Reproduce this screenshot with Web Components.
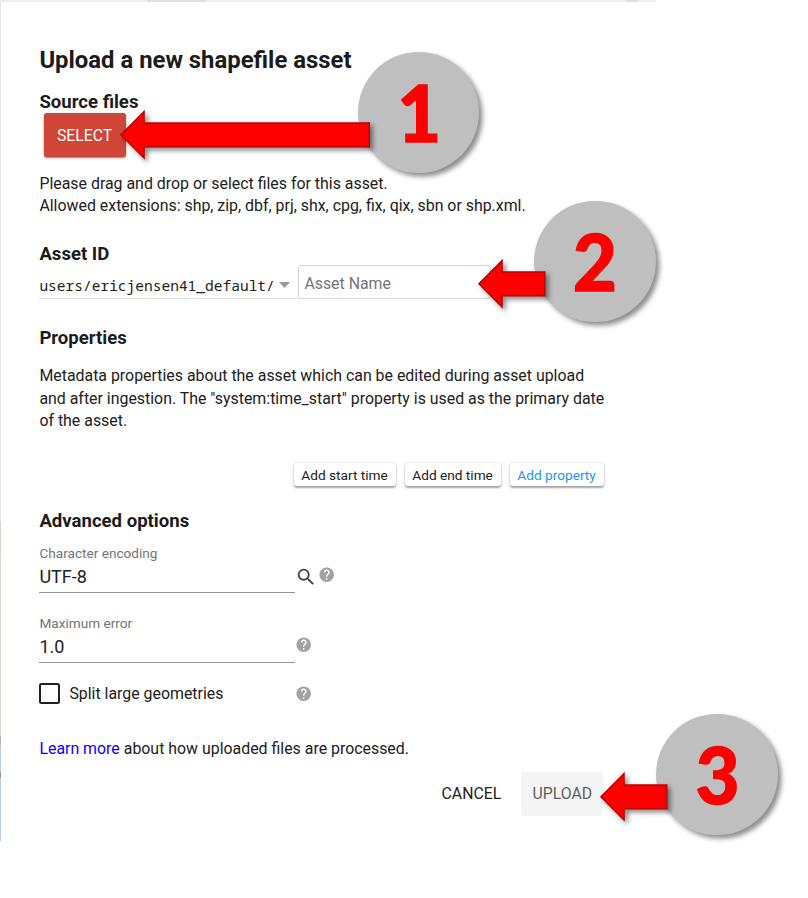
<!DOCTYPE html>
<html lang="en">
<head>
<meta charset="utf-8">
<title>Upload a new shapefile asset</title>
<style>
body{margin:0;background:#fff;font-family:Roboto,"Liberation Sans",sans-serif;color:#212121}
</style>
</head>
<body>
<tutorial-page></tutorial-page>
<script>
function define(name, html){
  const t=document.createElement('template');t.innerHTML=html;
  customElements.define(name,class extends HTMLElement{
    constructor(){super();this.attachShadow({mode:'open'}).append(t.content.cloneNode(true));}
  });
}

define('section-title',`<style>:host{display:block;font-size:18.57px;font-weight:700;line-height:22px;color:#1b1b1b;white-space:nowrap}</style><slot></slot>`);

define('body-text',`<style>:host{display:block;font-size:15.9px;line-height:22.4px;white-space:nowrap}</style><slot></slot>`);

define('action-button',`<style>
:host{display:flex;align-items:center;justify-content:center;box-sizing:border-box;height:44px;border-radius:3px;font-size:15.8px;white-space:nowrap}
:host([kind=primary]){background:#d04536;color:#fff;box-shadow:0 1px 2px rgba(0,0,0,.5)}
:host([kind=disabled]){background:#f5f5f5;color:#616161}
</style><slot></slot>`);

define('chip-button',`<style>
:host{display:flex;align-items:center;justify-content:center;height:23.5px;border-radius:3px;background:#fff;font-size:13.66px;white-space:nowrap;box-shadow:0 1.5px 2px rgba(0,0,0,.34),0 0 3px rgba(0,0,0,.1)}
:host([kind=link]){color:#2492f8}
</style><slot></slot>`);

define('help-icon',`<style>:host{display:block;width:17.4px;height:17.4px}svg{display:block;width:100%;height:100%}</style>
<svg viewBox="0 0 24 24"><path fill="#a2a2a2" d="M12 2C6.48 2 2 6.48 2 12s4.48 10 10 10 10-4.48 10-10S17.52 2 12 2zm1 17h-2v-2h2v2zm2.07-7.75l-.9.92C13.45 12.9 13 13.5 13 15h-2v-.5c0-1.1.45-2.1 1.17-2.83l1.24-1.26c.37-.36.59-.86.59-1.41 0-1.1-.9-2-2-2s-2 .9-2 2H8c0-2.21 1.79-4 4-4s4 1.79 4 4c0 .88-.36 1.68-.93 2.25z"/></svg>`);

define('search-icon',`<style>:host{display:block;width:22px;height:22px}svg{display:block;width:100%;height:100%}</style>
<svg viewBox="0 0 24 24"><path fill="#444" d="M15.5 14h-.79l-.28-.27A6.471 6.471 0 0 0 16 9.5 6.5 6.5 0 1 0 9.5 16c1.61 0 3.09-.59 4.23-1.57l.27.28v.79l5 4.99L20.49 19l-4.99-5zm-6 0C7.01 14 5 11.99 5 9.5S7.01 5 9.5 5 14 7.01 14 9.5 11.99 14 9.5 14z"/></svg>`);

define('text-field',`<style>
:host{display:block;box-sizing:border-box;width:256px;height:47.5px;border-bottom:1px solid #949494}
.l{font-size:13.62px;line-height:16px;color:#757575}
.v{font-size:18px;line-height:22px;margin-top:5px}
</style><div class="l"><slot name="label"></slot></div><div class="v"><slot></slot></div>`);

define('asset-id-row',`<style>
:host{display:flex;height:34px}
.path{box-sizing:border-box;width:259px;height:34px;border-bottom:1px solid #e0e0e0;display:flex;align-items:center;font:14.54px/22px "Noto Sans Mono","DejaVu Sans Mono",monospace;padding-top:6.6px;white-space:nowrap}
svg{display:block;margin-left:4.5px;width:11px;height:6px}
.name{box-sizing:border-box;width:192.5px;height:34px;border:1px solid #d4d4d4;border-radius:3px;padding:2.8px 0 0 5px;display:flex;align-items:center;font-size:15.86px;color:#757575}
</style><div class="path"><slot name="path"></slot><svg viewBox="0 0 11 6"><path fill="#999" d="M0 0h11L5.5 6z"/></svg></div><div class="name"><slot name="name"></slot></div>`);

define('check-box',`<style>
:host{display:flex;align-items:center;height:21px;width:256.5px;font-size:15.88px;white-space:nowrap}
i{box-sizing:border-box;width:21px;height:21px;border:2px solid #212121;border-radius:2.5px;margin-right:9px}
</style><i></i><slot></slot>`);

/* Numbered disc of the walkthrough */
define('step-badge',`<style>
:host{position:absolute;box-sizing:border-box;width:121.5px;height:121.5px;padding:1px 1px 0 0;border-radius:50%;background:#bfbfbf;box-shadow:3.5px 3.5px 5px rgba(0,0,0,.45);display:flex;align-items:center;justify-content:center;color:#f00;font:700 86.5px/1 Carlito,Lato,sans-serif;-webkit-text-stroke:1.6px #f00;paint-order:stroke;stroke-linejoin:round}
</style><slot></slot>`);

/* Left-pointing block arrow; "length" is the distance from tip to tail */
customElements.define('block-arrow',class extends HTMLElement{
  constructor(){
    super();
    const n=+this.getAttribute('length');
    this.attachShadow({mode:'open'}).innerHTML=`<style>:host{position:absolute;filter:drop-shadow(3px 3px 2.5px rgba(0,0,0,.45))}svg{display:block;overflow:visible}</style>
<svg width="${n}" height="50"><path fill="#f00" stroke="#c00000" stroke-width="1.6" d="M1 24.8L24 1.8V13H${n-.8}V36.8H24V47.8Z"/></svg>`;
  }
});

define('upload-dialog',`<style>
:host{display:flex;flex-direction:column;align-items:flex-start;box-sizing:border-box;width:656px;height:839px;padding:44.4px 0 0 38.4px;border-left:1px solid #e0e0e0;border-image:linear-gradient(#e4e4e4 0 62%,#d5d6c6 62% 66%,#d8dccb 66% 87.5%,#b8b0b0 87.5% 88.5%,#b5cfe6 88.5% 91.8%,#9b9b9b 91.8% 92.5%,#b5cfe6 92.5%) 0 0 0 1}
h1{margin:0;font-size:23.86px;line-height:28px;font-weight:700;color:#1b1b1b;white-space:nowrap}
.chips{display:flex;width:564.2px;gap:9px;justify-content:flex-end;margin-top:30.2px}
.row{display:flex}
a{color:#1100f0}
.foot{display:flex;width:564px;margin-top:11.2px;justify-content:flex-end;gap:9px}
</style>
<h1>Upload a new shapefile asset</h1>
<section-title style="margin-top:16.6px">Source files</section-title>
<action-button kind="primary" style="width:82px;margin:.4px 0 0 4.2px">SELECT</action-button>
<body-text style="margin-top:15.6px">Please drag and drop or select files for this asset.<br>Allowed extensions: shp, zip, dbf, prj, shx, cpg, fix, qix, sbn or shp.xml.</body-text>
<section-title style="margin-top:25.2px">Asset ID</section-title>
<asset-id-row style="margin-top:.2px"><span slot="path">users/ericjensen41_default/</span><span slot="name">Asset Name</span></asset-id-row>
<section-title style="margin-top:27.8px">Properties</section-title>
<body-text style="margin-top:16.4px">Metadata properties about the asset which can be edited during asset upload<br>and after ingestion. The "system:time_start" property is used as the primary date<br>of the asset.</body-text>
<div class="chips"><chip-button style="width:102px">Add start time</chip-button><chip-button style="width:96px">Add end time</chip-button><chip-button kind="link" style="width:94px">Add property</chip-button></div>
<section-title style="margin-top:23.4px">Advanced options</section-title>
<div class="row" style="margin-top:13.4px"><text-field><span slot="label">Character encoding</span>UTF-8</text-field><search-icon style="margin:20.8px 0 0 0"></search-icon><help-icon style="margin:20.5px 0 0 .4px"></help-icon></div>
<div class="row" style="margin-top:22.5px"><text-field><span slot="label">Maximum error</span>1.0</text-field><help-icon style="margin:20.8px 0 0 -.5px"></help-icon></div>
<div class="row" style="margin-top:20.5px"><check-box>Split large geometries</check-box><help-icon style="margin:2px 0 0 -1px"></help-icon></div>
<body-text style="margin-top:34.2px"><a>Learn more</a> about how uploaded files are processed.</body-text>
<div class="foot"><action-button style="width:82px">CANCEL</action-button><action-button kind="disabled" style="width:82px">UPLOAD</action-button></div>`);

define('tutorial-page',`<style>
:host{display:block;position:relative;width:808px;height:898px;overflow:hidden;background:#fff}
.strip{height:2px;width:656px;background:linear-gradient(90deg,transparent 148px,#ccc 148px 149px,#e0e0e0 149px 206px,transparent 206px 627px,#ddd 627px 637px,transparent 637px),#eee}
</style>
<div class="strip"></div>
<upload-dialog></upload-dialog>
<step-badge style="left:357.6px;top:51.8px">1</step-badge>
<step-badge style="left:534.3px;top:200.8px">2</step-badge>
<step-badge style="left:656.3px;top:713.8px">3</step-badge>
<block-arrow length="250" style="left:120.2px;top:110.4px"></block-arrow>
<block-arrow length="67.5" style="left:477.8px;top:258.7px"></block-arrow>
<block-arrow length="67.5" style="left:599.7px;top:771.7px"></block-arrow>`);
</script>
</body>
</html>
